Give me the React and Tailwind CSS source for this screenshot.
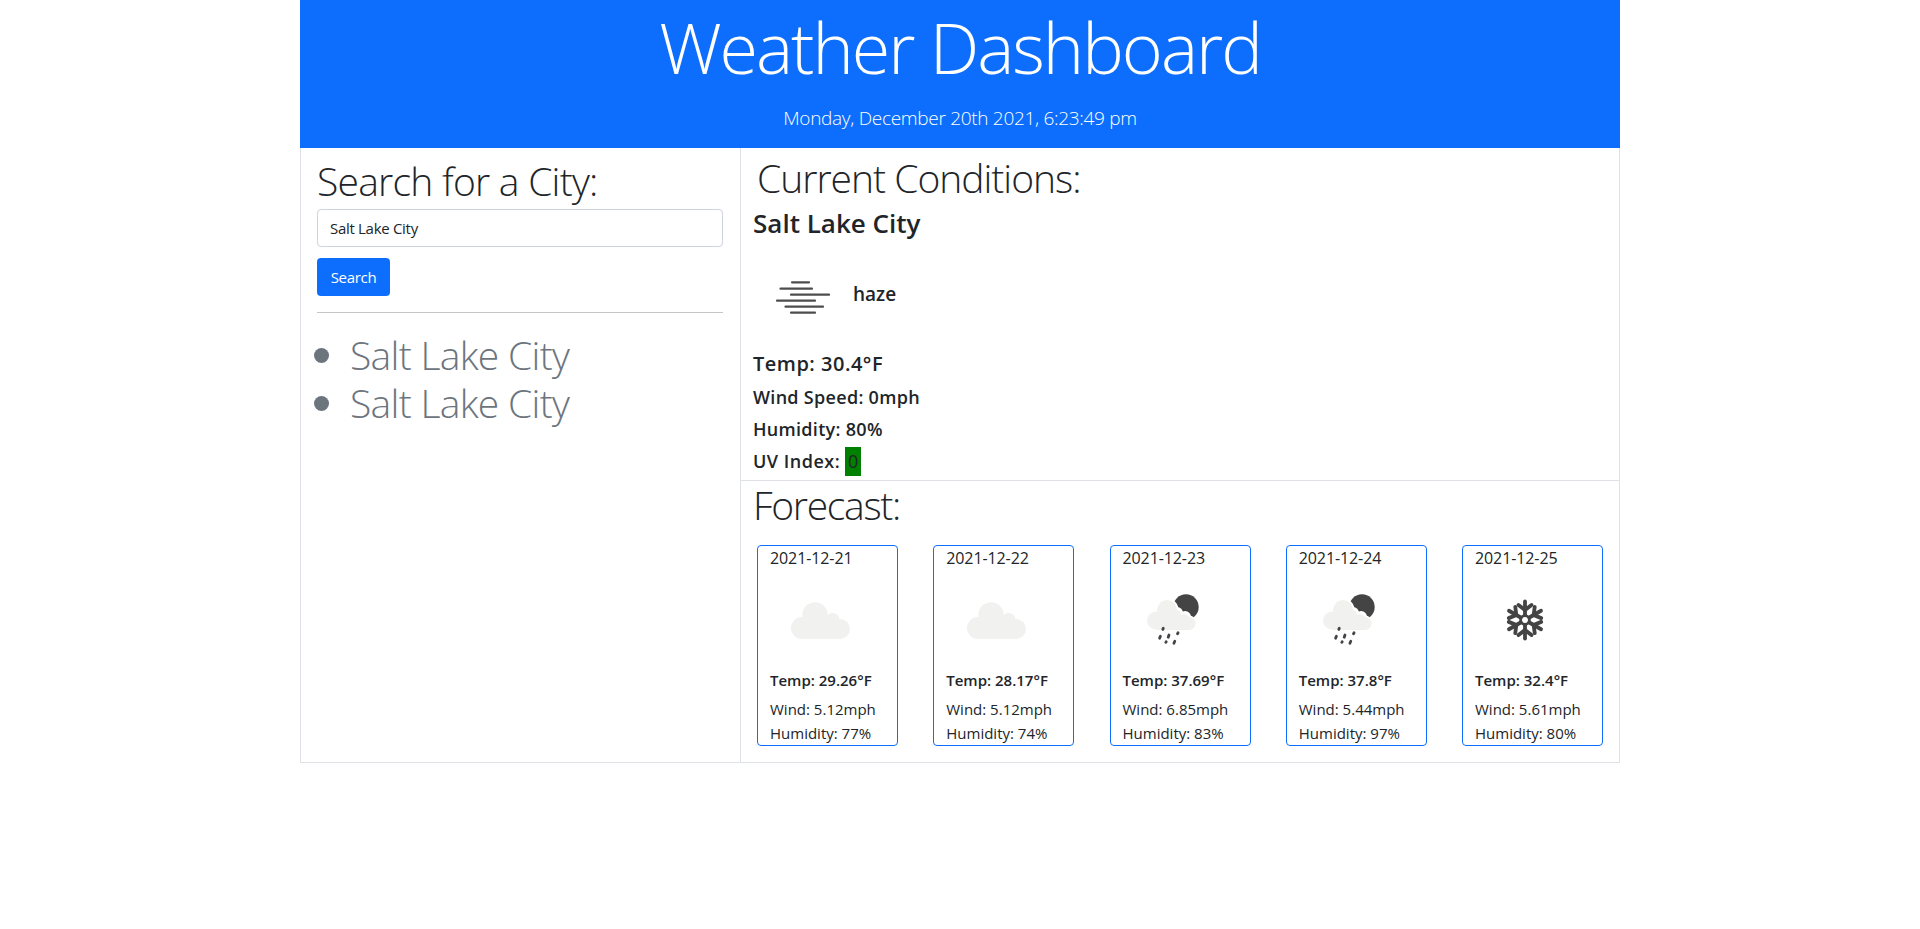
import React from 'react';

const forecast = [
  { date: '2021-12-21', temp: '29.26', wind: '5.12', humidity: '77', icon: 'cloud' },
  { date: '2021-12-22', temp: '28.17', wind: '5.12', humidity: '74', icon: 'cloud' },
  { date: '2021-12-23', temp: '37.69', wind: '6.85', humidity: '83', icon: 'rain' },
  { date: '2021-12-24', temp: '37.8', wind: '5.44', humidity: '97', icon: 'rain' },
  { date: '2021-12-25', temp: '32.4', wind: '5.61', humidity: '80', icon: 'snow' },
];

const CloudIcon = () => (
  <svg width="100" height="88" viewBox="0 0 100 88">
    <g fill="#f1f1f0">
      <circle cx="38" cy="35" r="12.7" />
      <circle cx="55.7" cy="40" r="7" />
      <circle cx="25" cy="48" r="11" />
      <circle cx="63" cy="49" r="10" />
      <rect x="25" y="40" width="38" height="19" />
    </g>
  </svg>
);

const RainIcon = () => (
  <svg width="100" height="88" viewBox="-1 0 100 88">
    <circle cx="55" cy="27" r="12.7" fill="#444444" />
    <g fill="#ffffff">
      <circle cx="36" cy="30" r="11.5" />
      <circle cx="46" cy="33" r="6" />
      <circle cx="54" cy="37" r="6" />
      <circle cx="58" cy="43" r="7.5" />
    </g>
    <g fill="#f1f1f0">
      <circle cx="36" cy="30" r="10" />
      <circle cx="45" cy="35" r="5" />
      <circle cx="53" cy="38.5" r="4.5" />
      <circle cx="25" cy="40.5" r="9" />
      <circle cx="58" cy="43.5" r="6.5" />
      <rect x="25" y="36" width="33" height="14" />
    </g>
    <g stroke="#444444" strokeWidth="2.8" strokeLinecap="round">
      <path d="M32.3 48.2l-.5 1.2" />
      <path d="M29.4 56.2l-.8 2" />
      <path d="M38 55l-.8 2.2" />
      <path d="M47 52.8l-.5 1" />
      <path d="M35.2 61.7l-.4.7" />
      <path d="M43.8 61.2l-.9 2" />
    </g>
  </svg>
);

const SnowIcon = () => (
  <svg width="100" height="88" viewBox="-1 0 100 88">
    <g stroke="#444444" strokeWidth="3.8" strokeLinecap="round" fill="none">
      {[0, 60, 120, 180, 240, 300].map((deg) => (
        <g key={deg} transform={`rotate(${deg} 42 40)`}>
          <path d="M42 35V21.5" />
          <path d="M35.5 25l6.5 5 6.5-5" />
        </g>
      ))}
    </g>
    <circle cx="42" cy="40" r="4.4" fill="none" stroke="#444444" strokeWidth="2.8" />
  </svg>
);

const HazeIcon = () => (
  <svg width="100" height="100" viewBox="0 0 100 100">
    <g stroke="#4d4d4d" strokeWidth="2.2" strokeLinecap="round">
      <path d="M39 38.3H56" />
      <path d="M27.5 44.7H59" />
      <path d="M38 50.7H76" />
      <path d="M24 56.7H62" />
      <path d="M32.5 62.7H70" />
      <path d="M38 68.7H62" />
    </g>
  </svg>
);

const icons = { cloud: CloudIcon, rain: RainIcon, snow: SnowIcon };

export default function App() {
  return (
    <div className="mx-auto w-[1320px] font-['Open_Sans',sans-serif] text-[#212529]">
      <header className="h-[148px] bg-[#0d6efd] text-center text-white">
        <h1 className="pt-[5px] text-[70px] font-light leading-[84px] tracking-[-2px]">Weather Dashboard</h1>
        <p className="mt-[15px] text-[19px] font-light leading-[28px] tracking-[-0.3px]">Monday, December 20th 2021, 6:23:49 pm</p>
      </header>

      <main className="flex h-[615px] border-x border-b border-[#dee2e6]">
        <aside className="w-[440px] shrink-0 border-r border-[#dee2e6] px-4">
          <h2 className="pt-[9px] text-[39px] font-light leading-[47px] tracking-[-0.75px]">Search for a City:</h2>
          <input
            readOnly
            value="Salt Lake City"
            className="mt-[5px] block h-[38px] w-[406px] rounded border border-[#ced4da] px-3 text-[15px] tracking-[-0.3px] text-[#212529]"
          />
          <button className="mt-[11px] block h-[38px] w-[73px] rounded bg-[#0d6efd] text-[15px] tracking-[-0.3px] text-white">Search</button>
          <hr className="mt-[16px] w-[406px] border-[#c4c6c8]" />
          <ul className="mt-[18px] list-none text-[#6c757d]">
            {['Salt Lake City', 'Salt Lake City'].map((city, i) => (
              <li key={i} className="flex h-[48px] items-center text-[39px] font-light leading-[48px] tracking-[-0.7px]">
                <span className="ml-[-3px] mr-[21px] h-[15px] w-[15px] rounded-full bg-[#6c757d]" />
                {city}
              </li>
            ))}
          </ul>
        </aside>

        <section className="flex-1">
          <div className="h-[333px] border-b border-[#dee2e6] px-[12px]">
            <h2 className="pt-[6px] pl-[4px] text-[39px] font-light leading-[48px] tracking-[-1px]">Current Conditions:</h2>
            <h3 className="mt-[5px] text-[26px] font-semibold leading-[32px]">Salt Lake City</h3>
            <div className="mt-[5px] flex h-[100px] items-center">
              <HazeIcon />
              <span className="text-[19px] font-semibold">haze</span>
            </div>
            <p className="mt-[2px] text-[20px] font-semibold leading-[35px] tracking-[0.5px]">Temp: 30.4°F</p>
            <p className="text-[18px] font-semibold leading-[32px] tracking-[0.3px]">Wind Speed: 0mph</p>
            <p className="text-[18px] font-semibold leading-[32px] tracking-[0.3px]">Humidity: 80%</p>
            <p className="text-[18px] font-semibold leading-[32px] tracking-[0.5px]">
              UV Index: <span className="inline-block h-[29px] w-[16px] bg-[#008000] text-center font-normal leading-[29px]">0</span>
            </p>
          </div>

          <div className="px-[12px]">
            <h2 className="text-[39px] font-light leading-[48px] tracking-[-1.3px]">Forecast:</h2>
            <div className="mt-[16px] flex justify-between px-[4px]">
              {forecast.map((day) => {
                const Icon = icons[day.icon];
                return (
                  <div key={day.date} className="h-[201px] w-[141px] rounded border border-[#0d6efd] px-3 text-[15px]">
                    <p className="text-[16px] leading-[24px] tracking-[-0.1px]">{day.date}</p>
                    <div className="-ml-[1px] mt-[10px] flex h-[88px] justify-center">
                      <Icon />
                    </div>
                    <p className="font-semibold leading-[24px]">Temp: {day.temp}°F</p>
                    <p className="mt-[5px] leading-[24px]">Wind: {day.wind}mph</p>
                    <p className="leading-[24px]">Humidity: {day.humidity}%</p>
                  </div>
                );
              })}
            </div>
          </div>
        </section>
      </main>
    </div>
  );
}
